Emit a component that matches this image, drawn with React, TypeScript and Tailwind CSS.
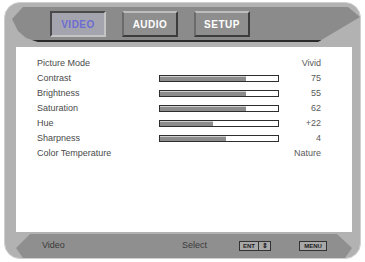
const rows = [
  { label: "Picture Mode", value: "Vivid" },
  { label: "Contrast", value: "75", fill: 73 },
  { label: "Brightness", value: "55", fill: 73 },
  { label: "Saturation", value: "62", fill: 73 },
  { label: "Hue", value: "+22", fill: 45 },
  { label: "Sharpness", value: "4", fill: 56 },
  { label: "Color Temperature", value: "Nature" },
];

function Tab({ label, active }: { label: string; active?: boolean }) {
  return (
    <div
      className={
        active
          ? "flex h-[26px] w-[56px] items-center justify-center border-2 border-t-[#4a4a4a] border-l-[#4a4a4a] border-b-[#c4c4c4] border-r-[#c4c4c4] bg-[#a4a4ae] text-[10px] font-bold tracking-[0.5px] text-[#6c6cd2]"
          : "flex h-[26px] w-[56px] items-center justify-center border-2 border-t-[#bdbdbd] border-l-[#6a6a6a] border-b-[#3c3c3c] border-r-[#3c3c3c] bg-[#8e8e8e] text-[10px] font-bold tracking-[0.5px] text-white"
      }
    >
      {label}
    </div>
  );
}

function Bar({ fill }: { fill: number }) {
  return (
    <div className="h-[7px] w-[120px] border-[1.5px] border-[#2e2e2e] bg-white">
      <div className="h-full border-t border-[#cfcfcf] bg-[#8c8c8c]" style={{ width: `${fill}%` }} />
    </div>
  );
}

export default function App() {
  return (
    <div className="h-[262px] w-[365px] bg-white pl-[4px] pt-[2px] font-['Liberation_Sans',Arial,sans-serif]">
      <div className="flex h-[257px] w-[357px] flex-col rounded-[16px] border border-[#cfcfcf] bg-[#b2b2b2]">
        {/* TOP BAR */}
        <div className="h-[44px] pl-[7px] pt-[4px]">
          <div className="flex h-[35px] w-[348px] gap-[16px] border-b-2 border-[#2a2a2a] bg-[#8b8b8b] pl-[38px] pt-[4px] [clip-path:polygon(11px_0,336px_0,348px_10px,306px_35px,26px_35px,14px_31px,6px_24px,0_12px)]">
            <Tab label="VIDEO" active />
            <Tab label="AUDIO" />
            <Tab label="SETUP" />
          </div>
        </div>

        {/* PANEL */}
        <div className="ml-[11px] h-[186px] w-[336px] bg-white pt-[9px] text-[9px] text-[#4a4a4a]">
          {rows.map((row) => (
            <div key={row.label} className="flex h-[15px] items-center">
              <div className="w-[143px] pl-[21px]">{row.label}</div>
              <div className="w-[120px]">{row.fill !== undefined && <Bar fill={row.fill} />}</div>
              <div className="flex-1 pr-[31px] text-right text-[#5a5a5a]">{row.value}</div>
            </div>
          ))}
        </div>

        {/* BOTTOM BAR */}
        <div className="ml-[10px] mt-[2px] flex h-[24px] w-[340px] items-center bg-[#8f8f8f] text-[9px] text-[#3a3a3a] [clip-path:polygon(15px_0,322px_0,337px_14px,330px_24px,8px_24px,1px_14px)]">
          <div className="w-[167px] pl-[27px]">Video</div>
          <div className="w-[57px]">Select</div>
          <div className="flex h-[10px] w-[32px] items-center border border-[#333] bg-[#a8a8a8] text-[6px] font-bold text-[#222]">
            <span className="border-r border-[#333] px-[3px]">ENT</span>
            <span className="px-[3px] text-[7px]">⇕</span>
          </div>
          <div className="ml-[28px] flex h-[10px] w-[28px] items-center justify-center border border-[#333] bg-[#a8a8a8] text-[6px] font-bold text-[#222]">
            MENU
          </div>
        </div>
      </div>
    </div>
  );
}
